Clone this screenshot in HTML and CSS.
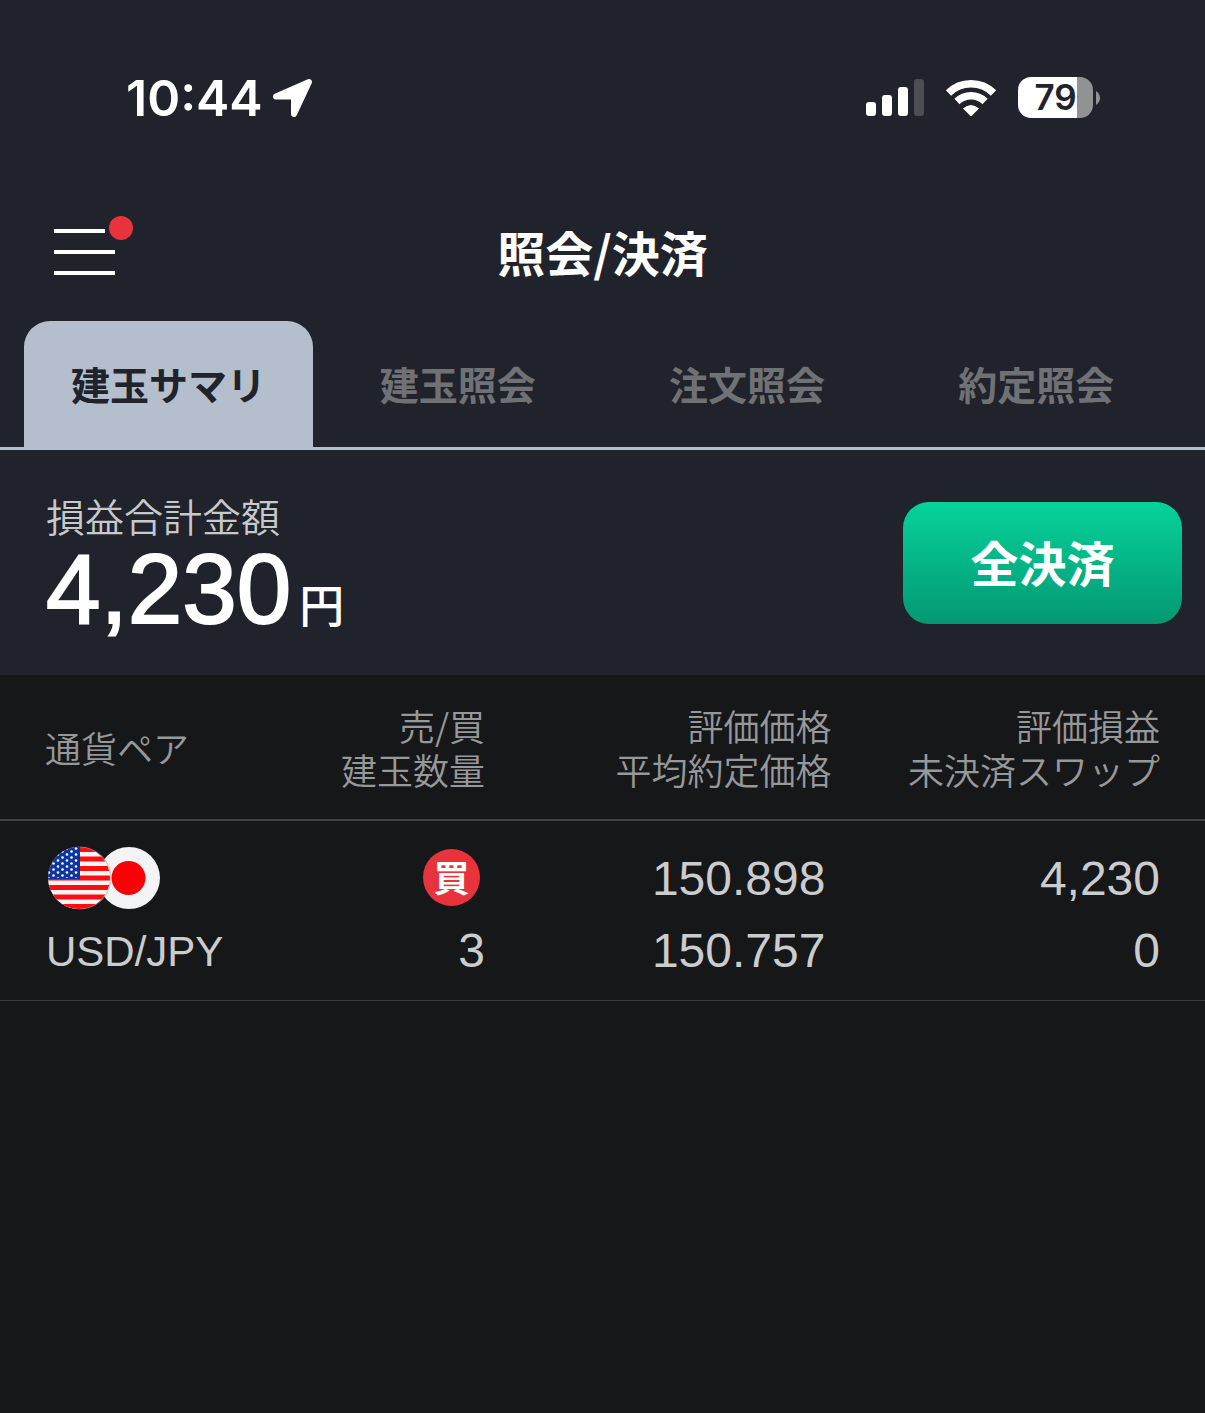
FILE: index.html
```html
<!DOCTYPE html>
<html lang="ja">
<head>
    <meta charset="UTF-8">
    <meta name="viewport" content="width=device-width, initial-scale=1">
    <title>照会/決済</title>
    <link rel="stylesheet" href="styles.css">
</head>
<body>
    <div class="top">
        <div class="status-bar">
            <div class="status-left">
                <span class="clock">10:44</span>
                <svg width="40" height="40" viewBox="0 0 40 40" aria-hidden="true">
                    <path d="M3 18.500 36 4 21 36V18.500Z" fill="#fff" stroke="#fff" stroke-width="6" stroke-linejoin="round"/>
                </svg>
            </div>
            <div class="status-right">
                <svg width="58" height="38" viewBox="0 0 58 38" aria-hidden="true">
                    <rect x="0" y="23" width="10" height="14" rx="3" fill="#fff"/>
                    <rect x="16" y="16" width="10" height="21" rx="3" fill="#fff"/>
                    <rect x="32" y="8" width="10" height="29" rx="3" fill="#fff"/>
                    <rect x="48" y="0" width="10" height="37" rx="3" fill="#4b4e53"/>
                </svg>
                <svg width="52" height="38" viewBox="0 0 52 38" aria-hidden="true">
                    <g fill="none" stroke="#fff" stroke-width="7.500">
                        <path d="M3.500 14A32 32 0 0 1 48.500 14"/>
                        <path d="M12 22.500A20 20 0 0 1 40 22.500"/>
                    </g>
                    <path d="M18 29.500Q26 22.500 34 29.500L27 36.500Q26 37.500 25 36.500Z" fill="#fff"/>
                </svg>
                <div class="battery">
                    <span class="battery-body">79</span>
                    <svg width="4" height="14" viewBox="0 0 4 14" aria-hidden="true">
                        <path d="M0 0Q4 3 4 7T0 14Z" fill="#919293"/>
                    </svg>
                </div>
            </div>
        </div>

        <header class="header">
            <button class="menu" type="button" aria-label="メニュー">
                <span class="menu-line first"></span>
                <span class="menu-line"></span>
                <span class="menu-line"></span>
                <span class="menu-dot"></span>
            </button>
            <h1>照会/決済</h1>
        </header>

        <nav class="tabs">
            <a class="tab active" href="#summary">建玉サマリ</a>
            <a class="tab" href="#positions">建玉照会</a>
            <a class="tab" href="#orders">注文照会</a>
            <a class="tab" href="#executions">約定照会</a>
        </nav>

        <section class="summary" id="summary">
            <div class="summary-text">
                <p class="summary-label">損益合計金額</p>
                <p class="summary-value"><span class="amount">4,230</span><span class="unit">円</span></p>
            </div>
            <button class="close-all" type="button">全決済</button>
        </section>
    </div>

    <table class="positions">
        <colgroup>
            <col class="col-pair">
            <col class="col-side">
            <col class="col-price">
            <col class="col-profit">
        </colgroup>
        <thead>
            <tr>
                <th>通貨ペア</th>
                <th>売/買<br>建玉数量</th>
                <th>評価価格<br>平均約定価格</th>
                <th>評価損益<br>未決済スワップ</th>
            </tr>
        </thead>
        <tbody>
            <tr>
                <td>
                    <div class="line">
                        <svg width="115" height="64" viewBox="0 0 115 64" aria-hidden="true">
                            <defs>
                                <clipPath id="us"><circle cx="33" cy="32" r="31"/></clipPath>
                                <pattern id="stars" x="1" y="1" width="9" height="6" patternUnits="userSpaceOnUse">
                                    <circle cx="2" cy="1.500" r="1.300" fill="#fff"/>
                                    <circle cx="6.500" cy="4.500" r="1.300" fill="#fff"/>
                                </pattern>
                            </defs>
                            <circle cx="83" cy="32" r="31" fill="#f4f4f6"/>
                            <circle cx="82.500" cy="32" r="17" fill="#fb0007"/>
                            <circle cx="34" cy="32" r="31.500" fill="#aaa" opacity=".5"/>
                            <g clip-path="url(#us)">
                                <rect width="66" height="64" fill="#f8f4f6"/>
                                <path d="M0 3.500H66M0 13H66M0 22.500H66M0 32H66M0 41.500H66M0 51H66M0 60.500H66" stroke="#fb0d12" stroke-width="4.800"/>
                                <rect width="34" height="33" fill="#0b36a0"/>
                                <rect width="33" height="32" fill="url(#stars)"/>
                            </g>
                        </svg>
                    </div>
                    <div class="line pair">USD/JPY</div>
                </td>
                <td>
                    <div class="line"><span class="buy">買</span></div>
                    <div class="line">3</div>
                </td>
                <td class="price">
                    <div class="line">150.898</div>
                    <div class="line">150.757</div>
                </td>
                <td>
                    <div class="line">4,230</div>
                    <div class="line">0</div>
                </td>
            </tr>
        </tbody>
    </table>
</body>
</html>
```
FILE: styles.css
```css
* {
    box-sizing: border-box;
}

body {
    margin: 0;
    min-height: 100vh;
    background: #161719;
    color: #fff;
    font-family: "Liberation Sans", "Noto Sans CJK JP", sans-serif;
}

button {
    border: none;
    padding: 0;
    color: inherit;
    cursor: pointer;
}

.top {
    background: #20232b;
}

/* status bar */
.status-bar {
    display: flex;
    justify-content: space-between;
    align-items: center;
    height: 195px;
    padding: 0 105px 0 126px;
    font-family: Inter, sans-serif;
    font-weight: 600;
}

.status-left,
.status-right,
.battery {
    display: flex;
    align-items: center;
}

.status-left {
    gap: 10px;
}

.status-right {
    gap: 21px;
}

.clock {
    font-size: 50px;
    line-height: 60px;
}

.battery {
    gap: 3px;
}

.battery-body {
    width: 75px;
    height: 41px;
    border-radius: 13px;
    background: linear-gradient(to right, #fff 79%, #919293 79%);
    color: #20232b;
    font-size: 35px;
    font-weight: 600;
    line-height: 41px;
    text-align: center;
}

/* title */
.header {
    position: relative;
    display: flex;
    justify-content: center;
    align-items: center;
    height: 126px;
    padding-bottom: 14px;
}

.header h1 {
    margin: 0;
    font-family: "Noto Sans CJK JP", sans-serif;
    font-size: 48px;
    font-weight: 700;
    line-height: 72px;
}

.menu {
    position: absolute;
    left: 54px;
    top: 34px;
    display: flex;
    flex-direction: column;
    gap: 17px;
    width: 61px;
    background: none;
}

.menu-line {
    height: 4px;
    background: #fff;
}

.menu-line.first {
    width: 51px;
}

.menu-dot {
    position: absolute;
    right: -18px;
    top: -13px;
    width: 24px;
    height: 24px;
    border-radius: 50%;
    background: #e8323c;
}

/* tabs */
.tabs {
    display: flex;
    padding: 0 24px;
    border-bottom: 3px solid #b4becc;
}

.tab {
    flex: 1;
    height: 126px;
    border-radius: 26px 26px 0 0;
    color: #707174;
    font-family: "Noto Sans CJK JP", sans-serif;
    font-size: 39px;
    font-weight: 700;
    line-height: 124px;
    text-align: center;
    text-decoration: none;
}

.tab.active {
    background: #b4becc;
    color: #20232b;
}

/* summary */
.summary {
    display: flex;
    justify-content: space-between;
    align-items: center;
    height: 225px;
    padding: 0 23px 0 46px;
}

.summary-text {
    padding-top: 16px;
}

.summary p {
    margin: 0;
}

.summary-label {
    color: #c8c9cb;
    font-family: "Noto Sans CJK JP", sans-serif;
    font-size: 39px;
    font-weight: 350;
    line-height: 52px;
}

.summary-value {
    display: flex;
    align-items: baseline;
    gap: 8px;
    line-height: 96px;
}

.amount {
    font-size: 98px;
    -webkit-text-stroke: 2px #fff;
}

.unit {
    font-family: "Noto Sans CJK JP", sans-serif;
    font-size: 45px;
    font-weight: 500;
}

.close-all {
    width: 279px;
    height: 122px;
    padding-bottom: 4px;
    border-radius: 26px;
    background: linear-gradient(#06d29a, #049873);
    font-family: "Noto Sans CJK JP", sans-serif;
    font-size: 48px;
    font-weight: 700;
}

/* positions table */
.positions {
    width: 100%;
    table-layout: fixed;
    border-collapse: collapse;
    color: #cbccce;
    font-size: 48px;
}

.col-pair {
    width: 22%;
}

.col-side {
    width: 18.25%;
}

.col-price {
    width: 28.75%;
}

.positions th {
    height: 145px;
    padding: 0;
    border-bottom: 2px solid #424346;
    color: #97989a;
    font-family: "Noto Sans CJK JP", sans-serif;
    font-size: 36px;
    font-weight: 350;
    line-height: 44px;
    text-align: right;
    white-space: nowrap;
}

.positions td {
    padding: 21px 0 14px;
    border-bottom: 1px solid #38393b;
    text-align: right;
}

.positions th:first-child {
    padding-left: 45px;
    text-align: left;
}

.positions td:first-child {
    padding-left: 46px;
    text-align: left;
}

.positions th:last-child,
.positions td:last-child {
    padding-right: 45px;
}

.positions td.price {
    padding-right: 6px;
}

.line {
    display: flex;
    justify-content: flex-end;
    align-items: center;
    height: 72px;
}

td:first-child .line {
    justify-content: flex-start;
}

.pair {
    padding-top: 4px;
    font-size: 42px;
}

.buy {
    width: 57px;
    height: 57px;
    margin: 0 5px 2px 0;
    border-radius: 50%;
    background: #e8323c;
    color: #fff;
    font-family: "Noto Sans CJK JP", sans-serif;
    font-size: 36px;
    font-weight: 700;
    line-height: 54px;
    text-align: center;
}
```
